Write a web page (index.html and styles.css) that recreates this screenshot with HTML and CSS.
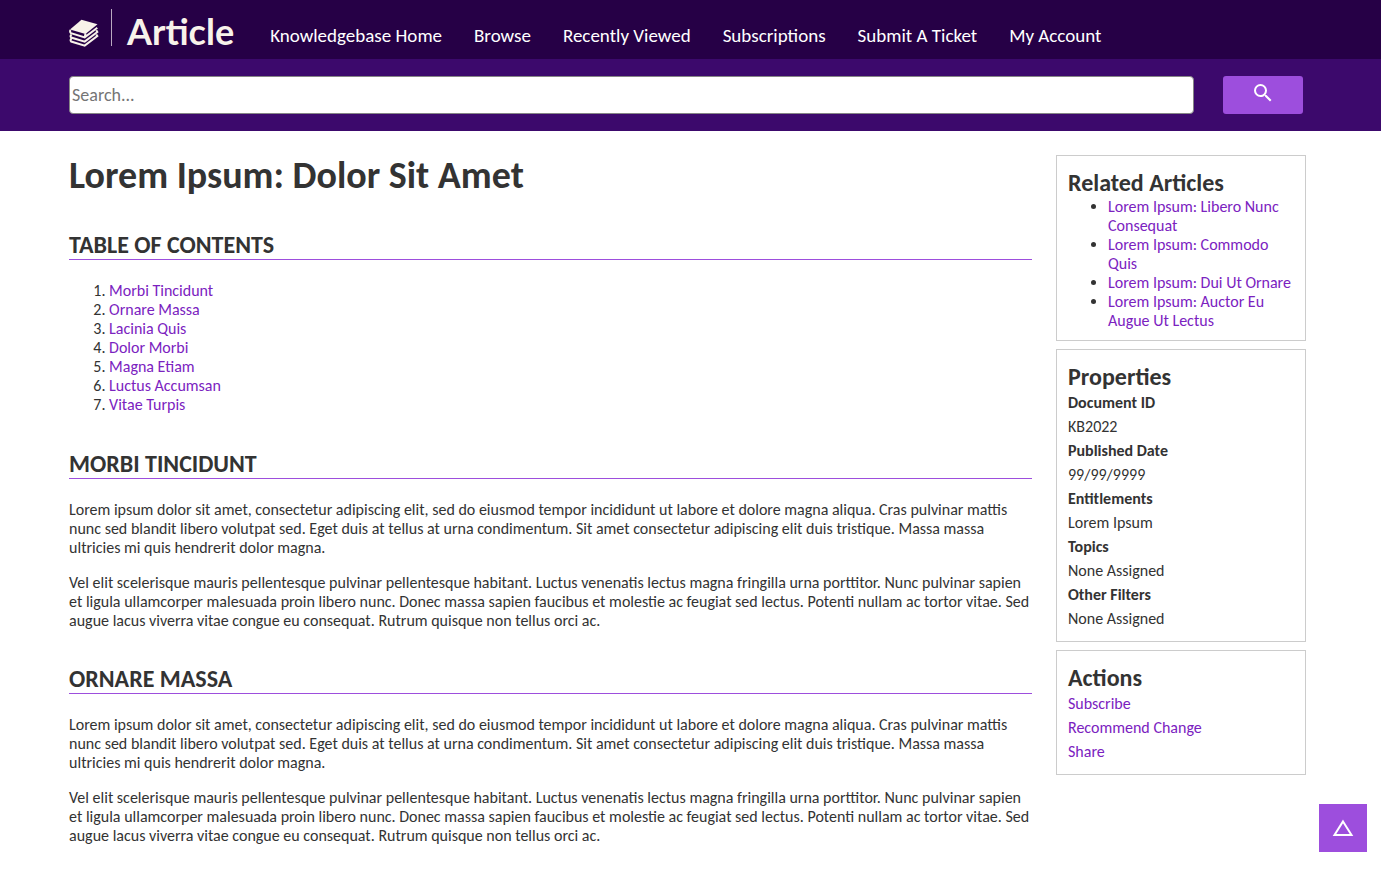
FILE: index.html
```html
<!DOCTYPE html>
<html lang="en">
<head>
<meta charset="utf-8">
<meta name="viewport" content="width=device-width, initial-scale=1">
<title>Article</title>
<link rel="stylesheet" href="styles.css">
</head>
<body>
<header class="topbar">
  <a class="logo" href="#">
    <svg class="logo-books" viewBox="0 0 30 30" aria-hidden="true">
      <path class="book-fill" d="M1 11.500 12.500 1.800 28.500 6.200 16.500 16Z"/>
      <path class="book-line" d="M1.500 12Q0.500 14 2 15.200L15.700 19.400 28.300 9.800M15.700 19.400 16.500 15.500M2.500 16.500Q0.800 18 2.200 19.500L15.700 23.600 28.300 14 27.300 12.300M2.500 20.500Q0.800 22 2.200 23.500L15.700 27.600 28.300 18 27.300 16.500"/>
    </svg>
    <span class="logo-rule"></span>
    <span class="logo-name">Article</span>
  </a>
  <nav class="nav" aria-label="Main">
    <a href="#">Knowledgebase Home</a>
    <a href="#">Browse</a>
    <a href="#">Recently Viewed</a>
    <a href="#">Subscriptions</a>
    <a href="#">Submit A Ticket</a>
    <a href="#">My Account</a>
  </nav>
</header>
<form class="search" role="search">
  <input class="search-box" type="search" placeholder="Search..." aria-label="Search">
  <button class="search-button" type="button" aria-label="Search">
    <svg viewBox="0 0 24 24" aria-hidden="true"><path d="M15.500 14h-.79l-.28-.27A6.470 6.470 0 0 0 16 9.500 6.500 6.500 0 1 0 9.500 16c1.610 0 3.090-.59 4.230-1.570l.27.28v.79l5 4.990L20.490 19l-4.990-5zm-6 0C7.010 14 5 11.990 5 9.500S7.010 5 9.500 5 14 7.010 14 9.500 11.990 14 9.500 14z"/></svg>
  </button>
</form>
<div class="layout">
  <main class="article">
    <h1>Lorem Ipsum: Dolor Sit Amet</h1>
    <h2>Table of Contents</h2>
    <ol class="toc">
      <li><a href="#morbi">Morbi Tincidunt</a></li>
      <li><a href="#ornare">Ornare Massa</a></li>
      <li><a href="#lacinia">Lacinia Quis</a></li>
      <li><a href="#dolor">Dolor Morbi</a></li>
      <li><a href="#magna">Magna Etiam</a></li>
      <li><a href="#luctus">Luctus Accumsan</a></li>
      <li><a href="#vitae">Vitae Turpis</a></li>
    </ol>
    <h2 id="morbi">Morbi Tincidunt</h2>
    <p>Lorem ipsum dolor sit amet, consectetur adipiscing elit, sed do eiusmod tempor incididunt ut labore et dolore magna aliqua. Cras pulvinar mattis nunc sed blandit libero volutpat sed. Eget duis at tellus at urna condimentum. Sit amet consectetur adipiscing elit duis tristique. Massa massa ultricies mi quis hendrerit dolor magna.</p>
    <p>Vel elit scelerisque mauris pellentesque pulvinar pellentesque habitant. Luctus venenatis lectus magna fringilla urna porttitor. Nunc pulvinar sapien et ligula ullamcorper malesuada proin libero nunc. Donec massa sapien faucibus et molestie ac feugiat sed lectus. Potenti nullam ac tortor vitae. Sed augue lacus viverra vitae congue eu consequat. Rutrum quisque non tellus orci ac.</p>
    <h2 id="ornare">Ornare Massa</h2>
    <p>Lorem ipsum dolor sit amet, consectetur adipiscing elit, sed do eiusmod tempor incididunt ut labore et dolore magna aliqua. Cras pulvinar mattis nunc sed blandit libero volutpat sed. Eget duis at tellus at urna condimentum. Sit amet consectetur adipiscing elit duis tristique. Massa massa ultricies mi quis hendrerit dolor magna.</p>
    <p>Vel elit scelerisque mauris pellentesque pulvinar pellentesque habitant. Luctus venenatis lectus magna fringilla urna porttitor. Nunc pulvinar sapien et ligula ullamcorper malesuada proin libero nunc. Donec massa sapien faucibus et molestie ac feugiat sed lectus. Potenti nullam ac tortor vitae. Sed augue lacus viverra vitae congue eu consequat. Rutrum quisque non tellus orci ac.</p>
  </main>
  <aside class="sidebar">
    <section class="card">
      <h3>Related Articles</h3>
      <ul class="related">
        <li><a href="#">Lorem Ipsum: Libero Nunc Consequat</a></li>
        <li><a href="#">Lorem Ipsum: Commodo Quis</a></li>
        <li><a href="#">Lorem Ipsum: Dui Ut Ornare</a></li>
        <li><a href="#">Lorem Ipsum: Auctor Eu Augue Ut Lectus</a></li>
      </ul>
    </section>
    <section class="card">
      <h3>Properties</h3>
      <dl class="rows">
        <dt>Document ID</dt><dd>KB2022</dd>
        <dt>Published Date</dt><dd>99/99/9999</dd>
        <dt>Entitlements</dt><dd>Lorem Ipsum</dd>
        <dt>Topics</dt><dd>None Assigned</dd>
        <dt>Other Filters</dt><dd>None Assigned</dd>
      </dl>
    </section>
    <section class="card">
      <h3>Actions</h3>
      <div class="rows actions">
        <a href="#">Subscribe</a>
        <a href="#">Recommend Change</a>
        <a href="#">Share</a>
      </div>
    </section>
  </aside>
</div>
<button class="to-top" type="button" aria-label="Back to top">
  <svg viewBox="0 0 24 24" aria-hidden="true"><path d="M12 5.500 20.500 19H3.500Z"/></svg>
</button>
</body>
</html>
```

FILE: styles.css
```css
* { box-sizing: border-box; }
body {
  margin: 0;
  font: 16px/19px Carlito, Calibri, Lato, sans-serif;
  color: #333;
  background: #fff;
}
a { color: #7b22bf; text-decoration: none; }
.topbar {
  display: flex;
  gap: 36px;
  height: 59px;
  padding: 0 5%;
  background: #260046;
}
.logo { display: flex; align-items: flex-start; color: #f8f2ea; }
.logo-books { width: 30px; height: 30px; margin-top: 18px; }
.book-fill { fill: #f8f2ea; }
.book-line { fill: none; stroke: #f8f2ea; stroke-width: 2; }
.logo-rule { width: 1px; height: 37px; margin: 9px 15px 0 12px; background: #b9a9c0; }
.logo-name { margin-top: 11px; font: bold 36px/40px Lato, sans-serif; }
.nav { display: flex; gap: 32px; padding-top: 24px; font-size: 19px; line-height: 24px; }
.nav a { color: #fff; white-space: nowrap; }
.search {
  display: flex;
  gap: 29px;
  padding: 17px 78px 17px 5%;
  background: #3c096c;
}
.search-box {
  flex: 1;
  min-width: 0;
  height: 38px;
  padding: 1px 2px;
  border: 1px solid #858585;
  border-radius: 4px;
  background: #fff;
  font: inherit;
  font-size: 18px;
}
.search-box::placeholder { color: #757575; }
.search-button {
  width: 80px;
  height: 38px;
  padding: 0 0 4px;
  border: 0;
  border-radius: 3px;
  background: #9d4edd;
}
.search-button svg { display: block; width: 24px; height: 24px; margin: 0 auto; fill: #fff; }
.layout {
  display: grid;
  grid-template-columns: minmax(0, 1fr) 250px;
  gap: 24px;
  align-items: start;
  padding: 24px 75px 20px 5%;
}
h1 { margin: 0 0 34px; font-size: 38px; line-height: 41px; }
h2 {
  margin: 35px 0 21px;
  padding-bottom: 1px;
  border-bottom: 1px solid #9d4edd;
  font-size: 24px;
  line-height: 27px;
  text-transform: uppercase;
}
p { margin: 0 0 16px; }
.toc { margin: 0 0 36px; padding-left: 40px; }
.sidebar { display: grid; gap: 8px; }
.card { padding: 14px 11px 10px; border: 1px solid #ccc; }
h3 { margin: 0 0 2px; font-size: 24px; line-height: 25px; }
.related { margin: 0; padding-left: 40px; }
.rows { margin: 0; line-height: 24px; }
dt { font-weight: bold; }
dd { margin: 0; }
.actions { display: grid; justify-items: start; }
.to-top {
  position: fixed;
  right: 14px;
  bottom: 28px;
  width: 48px;
  height: 48px;
  padding: 0;
  border: 0;
  background: #9d4edd;
}
.to-top svg { display: block; width: 24px; height: 24px; margin: 0 auto; fill: none; stroke: #fff; stroke-width: 2; }
```
